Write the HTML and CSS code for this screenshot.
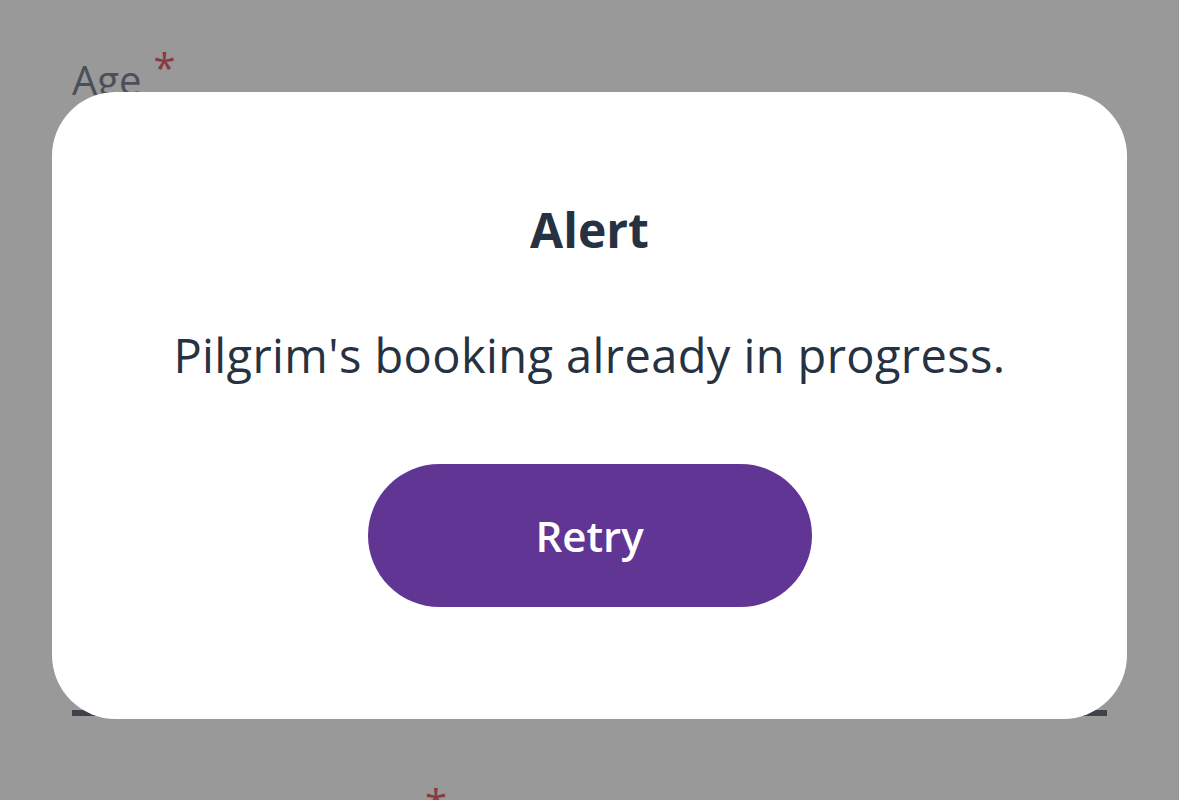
FILE: index.html
```html
<!DOCTYPE html>
<html lang="en">
<head>
<meta charset="utf-8">
<title>Alert</title>
<link rel="stylesheet" href="styles.css">
</head>
<body>
<form class="form">
  <div class="field">
    <label class="label">Age<span class="req">*</span></label>
    <div class="input"></div>
  </div>
  <div class="field">
    <label class="label">Relation to Pilgrim<span class="req">*</span></label>
    <div class="input"></div>
  </div>
</form>
<div class="overlay">
  <div class="dialog" role="alertdialog">
    <h2 class="dialog-title">Alert</h2>
    <p class="dialog-message">Pilgrim's booking already in progress.</p>
    <button class="dialog-button" type="button">Retry</button>
  </div>
</div>
</body>
</html>
```
FILE: styles.css
```css
html, body {
  margin: 0;
  padding: 0;
}
body {
  background: #999999;
  font-family: "Open Sans", "Noto Sans", sans-serif;
  overflow: hidden;
  height: 800px;
}
.form {
  padding: 53px 72px 0;
  display: flex;
  flex-direction: column;
  gap: 73px;
}
.field {
  display: flex;
  flex-direction: column;
}
.label {
  font-size: 40px;
  line-height: 54px;
  color: #4b4f57;
}
.req {
  color: #883a40;
  margin-left: 12px;
  line-height: 0;
  vertical-align: 12px;
}
.input {
  height: 603px;
  border-bottom: 6px solid #3e424a;
}
.overlay {
  position: fixed;
  inset: 0;
  display: flex;
  justify-content: center;
  align-items: flex-start;
  padding-top: 92px;
  box-sizing: border-box;
}
.dialog {
  width: 1075px;
  height: 627px;
  box-sizing: border-box;
  background: #ffffff;
  border-radius: 64px;
  padding-top: 105px;
  display: flex;
  flex-direction: column;
  align-items: center;
  color: #263242;
}
.dialog-title {
  margin: 0;
  font-size: 48px;
  font-weight: 700;
  line-height: normal;
}
.dialog-message {
  margin: 61px 0 0;
  font-size: 47px;
  font-weight: 400;
  letter-spacing: 0.4px;
  line-height: normal;
}
.dialog-button {
  margin-top: 77px;
  width: 444px;
  height: 143px;
  border: none;
  border-radius: 72px;
  background: #613594;
  color: #ffffff;
  font-family: "Open Sans", "Noto Sans", sans-serif;
  font-size: 42px;
  font-weight: 600;
  padding: 0;
}
```
